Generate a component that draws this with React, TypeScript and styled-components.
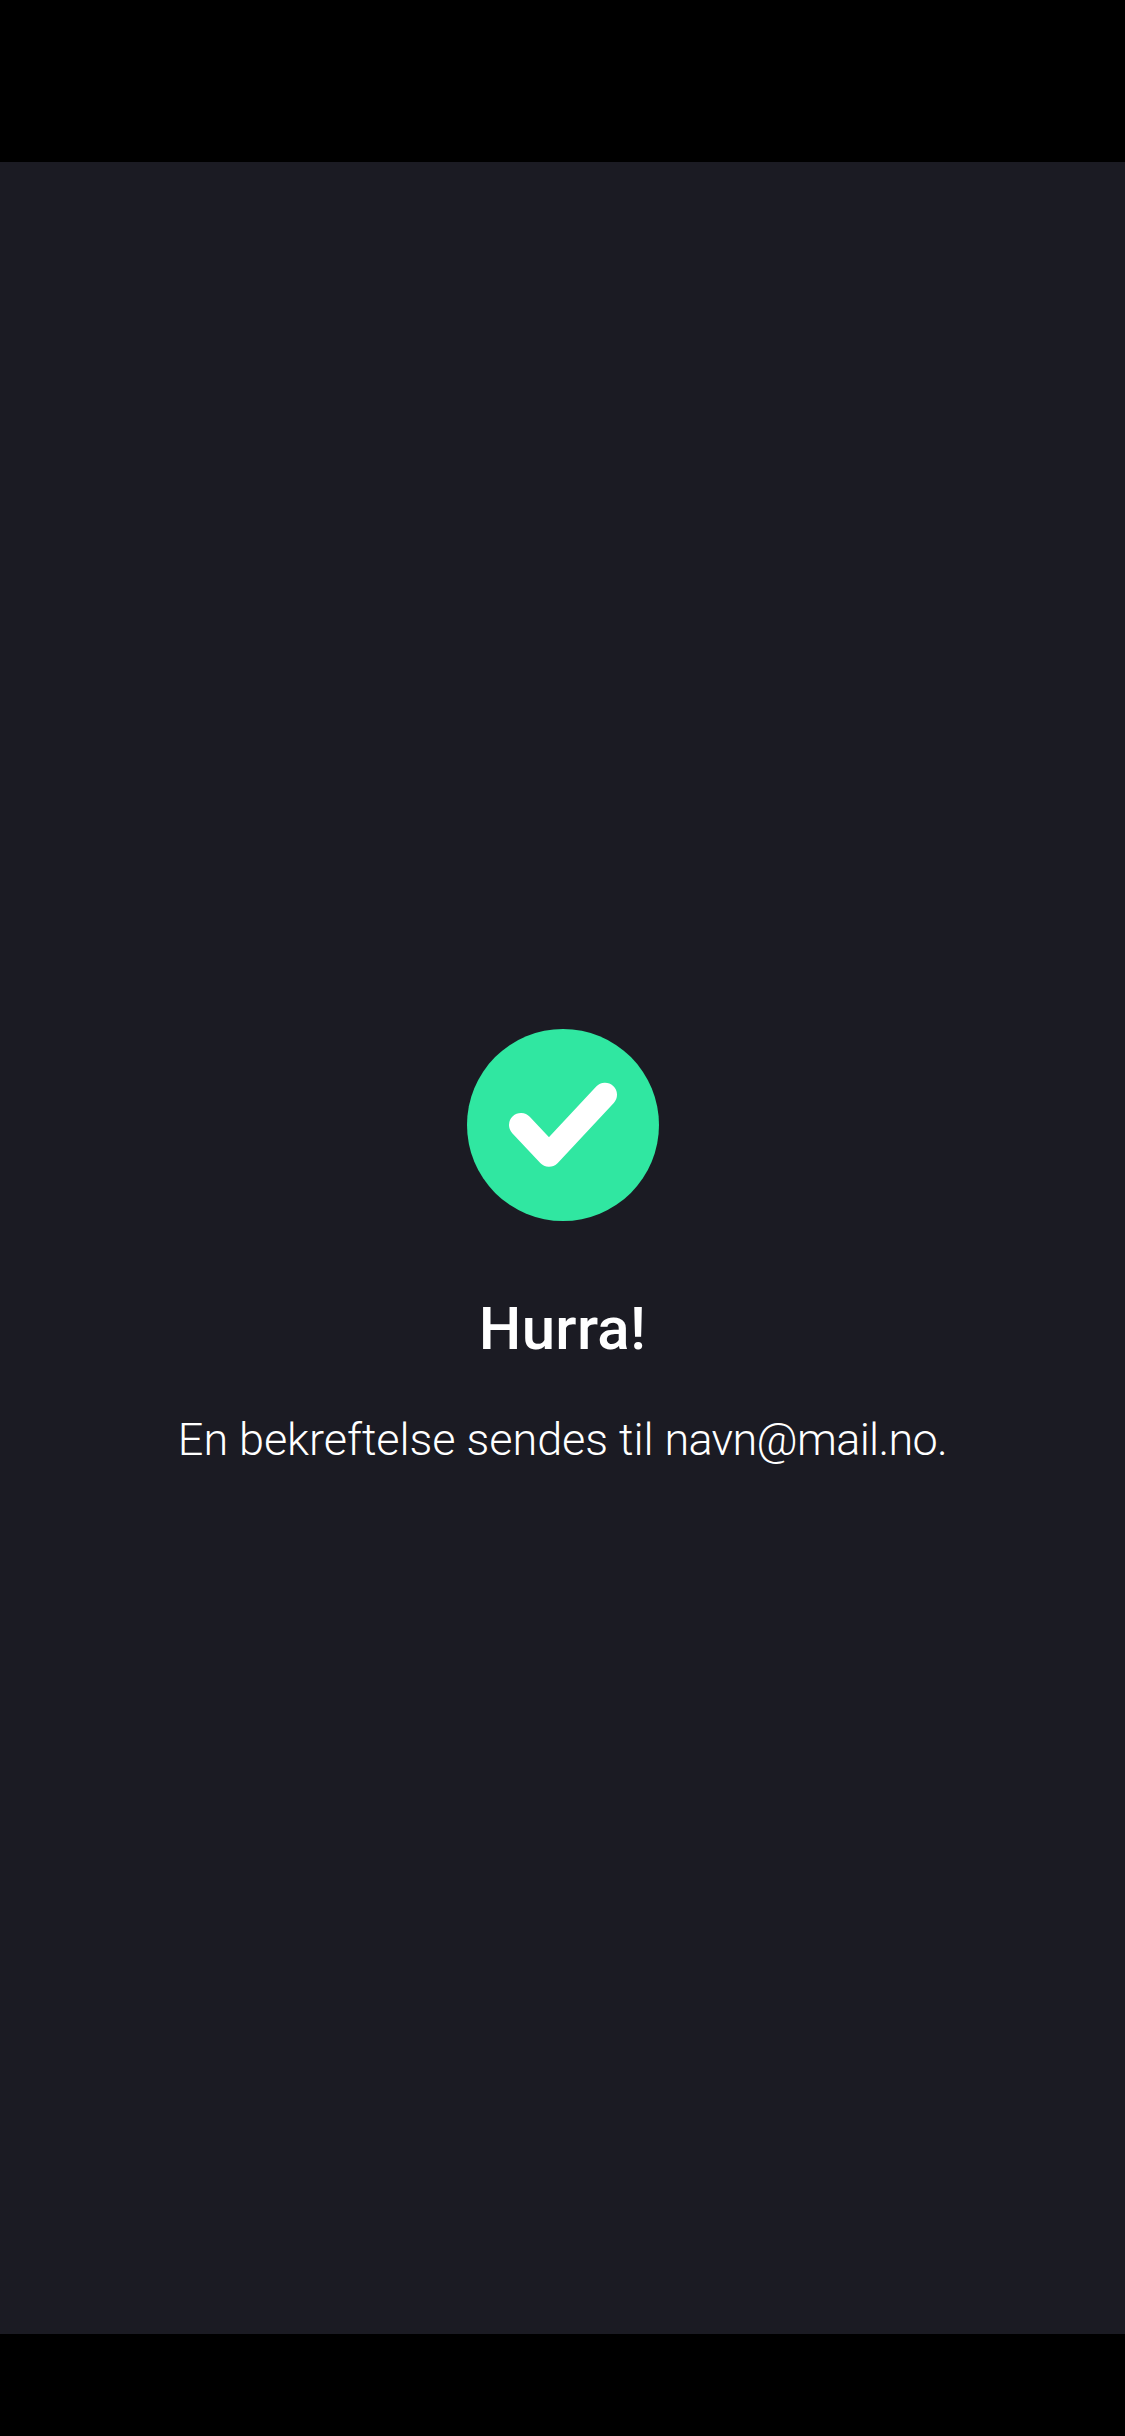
import React from "react";
import styled, { createGlobalStyle } from "styled-components";

const GlobalStyle = createGlobalStyle`
  body { margin: 0; background: #000; }
`;

const Screen = styled.main`
  box-sizing: border-box;
  width: 1125px;
  height: 2436px;
  padding: 162px 0 102px;
  background: #000;
`;

const Panel = styled.section`
  box-sizing: border-box;
  height: 100%;
  padding-top: 867px;
  display: flex;
  flex-direction: column;
  align-items: center;
  background: #1b1b23;
  color: #fff;
`;

const SuccessIcon = styled.svg`
  display: block;
  width: 192px;
  height: 192px;
`;

const Title = styled.h1`
  margin: 70px 0 0;
  font: 500 60px/76px Roboto, sans-serif;
  letter-spacing: 0.3px;
`;

const Message = styled.p`
  margin: 43px 0 0;
  font: 300 45px/60px Roboto, sans-serif;
  letter-spacing: -0.05px;
  white-space: nowrap;
`;

const Email = styled.span`
  letter-spacing: -0.7px;
`;

export default function App() {
  return (
    <>
      <GlobalStyle />
      <Screen>
        <Panel>
          <SuccessIcon viewBox="0 0 192 192" aria-hidden="true">
            <circle cx="96" cy="96" r="96" fill="#30e7a1" />
            <path d="M54 96 82 125.7 138 65.7" fill="none" stroke="#fff" strokeWidth="24" strokeLinecap="round" strokeLinejoin="round" />
          </SuccessIcon>
          <Title>Hurra!</Title>
          <Message>En bekreftelse sendes til <Email>navn@mail.no.</Email></Message>
        </Panel>
      </Screen>
    </>
  );
}
